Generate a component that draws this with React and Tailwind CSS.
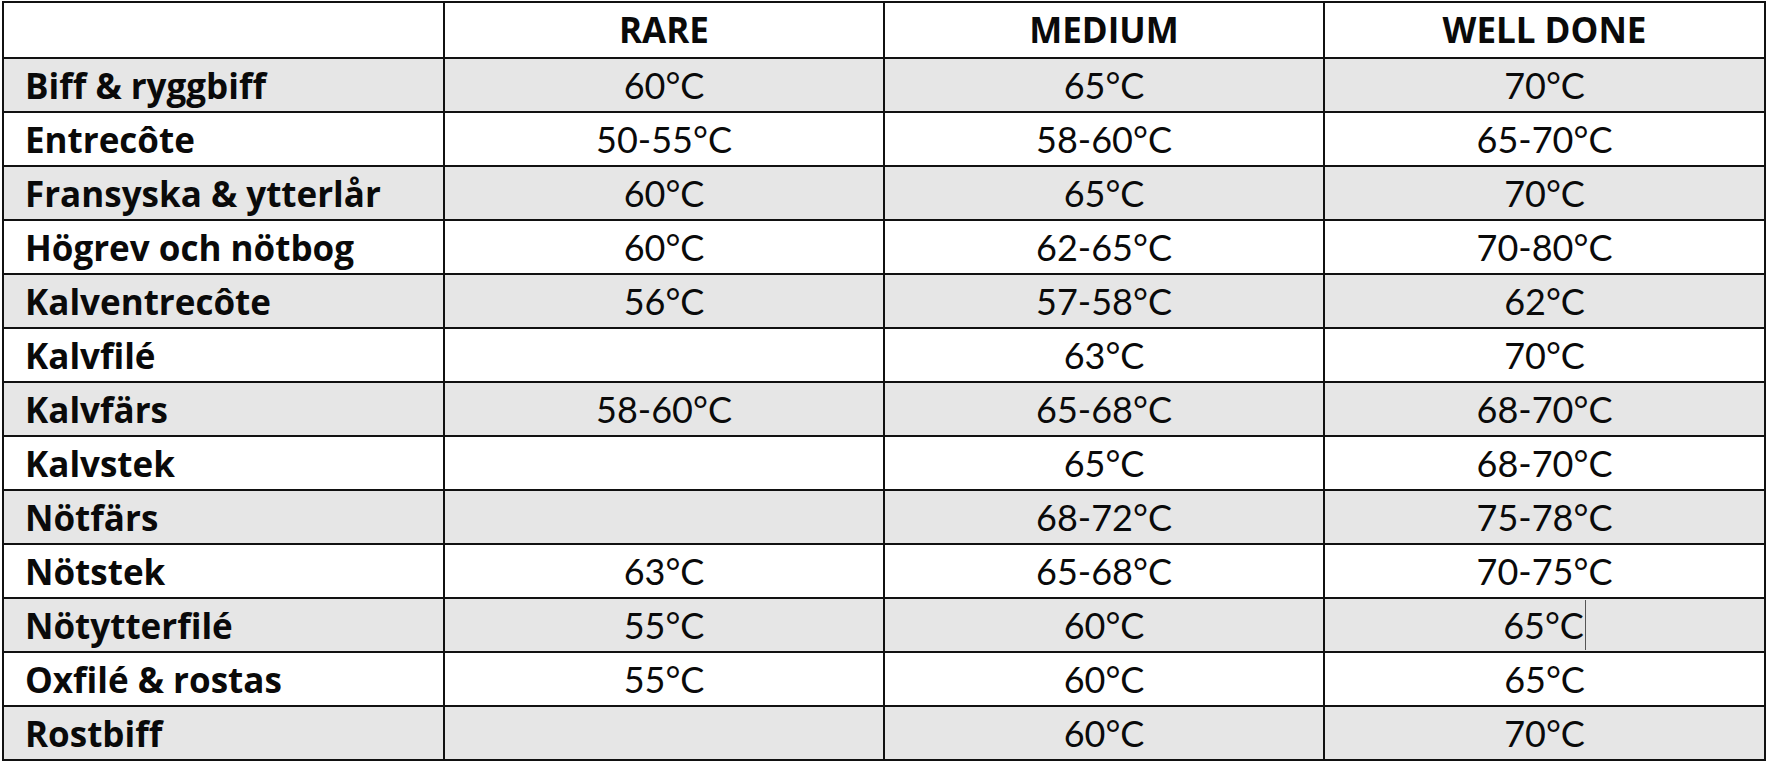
import React from 'react';

const rows = [
  ['Biff & ryggbiff', '60°C', '65°C', '70°C'],
  ['Entrecôte', '50-55°C', '58-60°C', '65-70°C'],
  ['Fransyska & ytterlår', '60°C', '65°C', '70°C'],
  ['Högrev och nötbog', '60°C', '62-65°C', '70-80°C'],
  ['Kalventrecôte', '56°C', '57-58°C', '62°C'],
  ['Kalvfilé', '', '63°C', '70°C'],
  ['Kalvfärs', '58-60°C', '65-68°C', '68-70°C'],
  ['Kalvstek', '', '65°C', '68-70°C'],
  ['Nötfärs', '', '68-72°C', '75-78°C'],
  ['Nötstek', '63°C', '65-68°C', '70-75°C'],
  ['Nötytterfilé', '55°C', '60°C', '65°C'],
  ['Oxfilé & rostas', '55°C', '60°C', '65°C'],
  ['Rostbiff', '', '60°C', '70°C'],
];

const bold = { fontFamily: '"Open Sans", Lato, sans-serif' };

const App = () => {
  return (
    <div className="w-[1766px] h-[766px] bg-white pt-[1px] pl-[2px] text-[#0a0a0a]" style={{ fontFamily: 'Lato, "Open Sans", sans-serif' }}>
      <table className="table-fixed border-collapse w-[1762px]">
        <thead>
          <tr className="h-[56px]">
            <th className="w-[441px] border-2 border-[#111]"></th>
            <th className="w-[440px] border-2 border-[#111] text-[35px] font-bold leading-none pb-[2px]" style={bold}>RARE</th>
            <th className="w-[440px] border-2 border-[#111] text-[35px] font-bold leading-none pb-[2px]" style={bold}>MEDIUM</th>
            <th className="w-[441px] border-2 border-[#111] text-[35px] font-bold leading-none pb-[2px]" style={bold}>WELL DONE</th>
          </tr>
        </thead>
        <tbody>
          {rows.map((r, i) => (
            <tr key={r[0]} className={i % 2 === 0 ? 'h-[54px] bg-[#e6e6e6]' : 'h-[54px] bg-white'}>
              <td className="border-2 border-[#111] pl-[21px] text-[35px] font-bold leading-none" style={bold}>{r[0]}</td>
              <td className="border-2 border-[#111] text-center text-[36px] leading-none">{r[1]}</td>
              <td className="border-2 border-[#111] text-center text-[36px] leading-none">{r[2]}</td>
              <td className="border-2 border-[#111] text-center text-[36px] leading-none">
                {r[0] === 'Nötytterfilé' ? (
                  <span className="inline-block border-r border-[#555] pr-[1px] h-[50px] leading-[50px]">{r[3]}</span>
                ) : (
                  r[3]
                )}
              </td>
            </tr>
          ))}
        </tbody>
      </table>
    </div>
  );
};

export default App;
